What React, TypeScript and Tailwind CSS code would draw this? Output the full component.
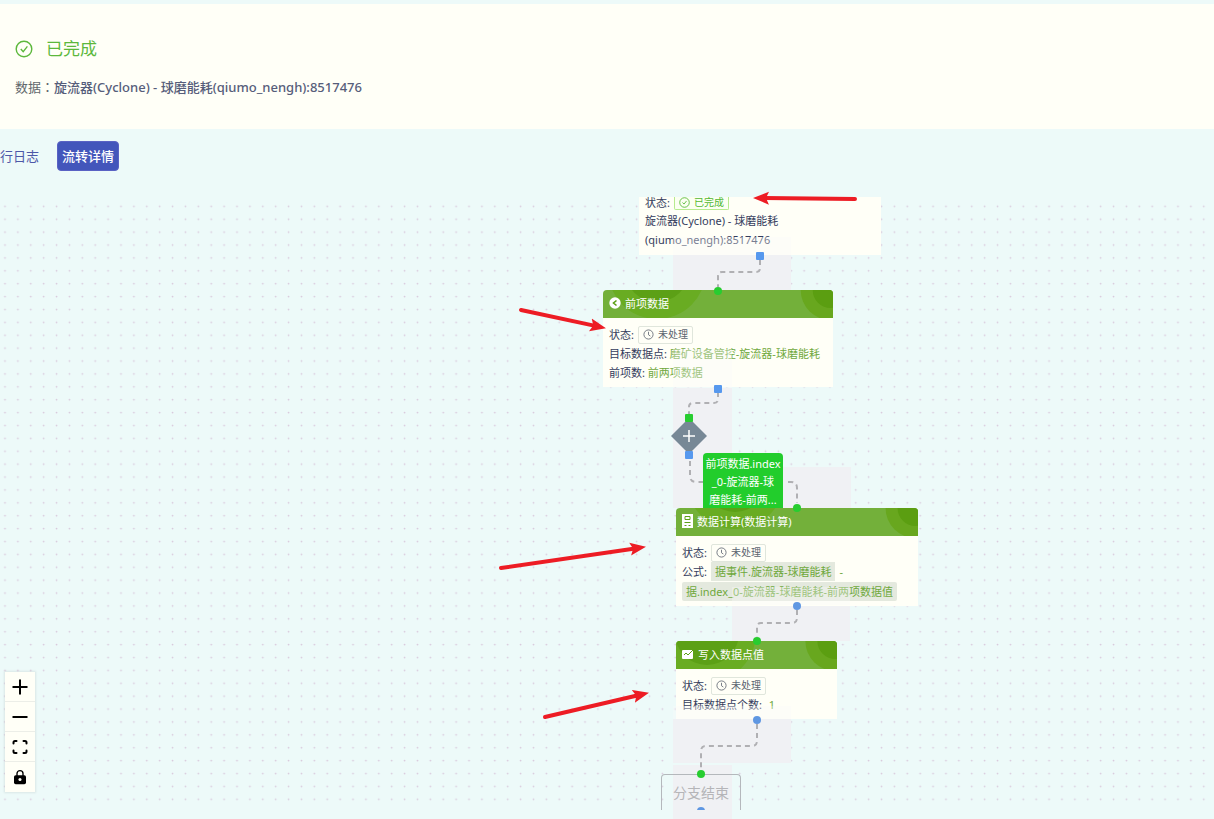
import { ReactNode } from "react";

interface FlowNodeProps {
  title: string;
  icon: ReactNode;
  className: string;
  ringX: number;
  ringY: number;
  children: ReactNode;
}

interface Point {
  x: number;
  y: number;
}

interface Arrow {
  from: Point;
  to: Point;
}

const arrows: Arrow[] = [
  { from: { x: 855, y: 2 }, to: { x: 754, y: 1 } },
  { from: { x: 521, y: 113 }, to: { x: 605, y: 131 } },
  { from: { x: 501, y: 371 }, to: { x: 645, y: 350 } },
  { from: { x: 545, y: 520 }, to: { x: 648, y: 496 } },
];

const edges = [
  "M760 63 V71 Q760 75 756 75 H722 Q718 75 718 79 V90",
  "M718 195 V202 Q718 206 714 206 H693 Q689 206 689 210 V218",
  "M690 264 V279 Q690 285 696 285 H704",
  "M788 285 H791 Q797 285 797 291 V306",
  "M797 413 V421 Q797 426 792 426 H761 Q757 426 757 430 V440",
  "M757 527 V544 Q757 549 752 549 H706 Q701 549 701 554 V573",
];

// grey areas behind the edges
const shades = [
  { x: 673, y: 58, w: 118, h: 36 },
  { x: 673, y: 191, w: 59, h: 120 },
  { x: 783, y: 270, w: 68, h: 41 },
  { x: 732, y: 409, w: 118, h: 35 },
  { x: 673, y: 522, w: 118, h: 44 },
  { x: 673, y: 568, w: 59, h: 54 },
];

const veils = [
  { x: 673, y: 40, w: 118, h: 18 },
  { x: 673, y: 152, w: 59, h: 39 },
  { x: 732, y: 390, w: 118, h: 18 },
  { x: 673, y: 509, w: 118, h: 13 },
];

function CheckCircle({ className }: { className: string }) {
  return (
    <svg
      viewBox="0 0 18 18"
      className={className}
      fill="none"
      stroke="currentColor"
      strokeWidth="1.4"
    >
      <circle cx="9" cy="9" r="7.8" />
      <path d="M5.8 9l2.4 2.6L12.4 6.4" />
    </svg>
  );
}

function ClockIcon() {
  return (
    <svg
      viewBox="0 0 12 12"
      className="size-[11px]"
      fill="none"
      stroke="currentColor"
      strokeWidth="0.9"
    >
      <circle cx="6" cy="6" r="5" />
      <path d="M6 3v3.3l2 1.4" />
    </svg>
  );
}

function Status() {
  return (
    <div className="flex h-[19px] items-center gap-1">
      <span>状态:</span>
      <span className="flex h-[18px] items-center gap-1 rounded-xs border border-[#e0e6dc] px-1 text-[10px] text-[#5c6470]">
        <ClockIcon />
        未处理
      </span>
    </div>
  );
}

function FlowNode(props: FlowNodeProps) {
  const { title, icon, className, ringX, ringY, children } = props;
  return (
    <div className={className}>
      <div className="relative h-7 overflow-hidden rounded-t-sm bg-[#73b03a]">
        <svg className="absolute inset-0 h-full w-full">
          <circle cx={ringX} cy={ringY} r="49" fill="#69ac22" />
          <circle cx={ringX} cy={ringY} r="32" fill="#5ca016" />
          <circle cx="99%" cy="0" r="30" fill="#68a71e" />
          <circle cx="99%" cy="0" r="18" fill="#5b9e11" />
        </svg>
        <div className="relative flex h-full items-center gap-1 px-1.5 pb-0.5 text-[11px] text-white">
          {icon}
          {title}
        </div>
      </div>
      <div className="bg-[#fffff7] px-1.5 pt-[7px] pb-[5px]">{children}</div>
    </div>
  );
}

function Controls() {
  const buttonClass =
    "flex h-[30px] w-[30px] items-center justify-center border-b border-[#eceee8] bg-[#fffff7] last:border-b-0";
  return (
    <div className="absolute bottom-[27px] left-[5px] shadow-[0_0_2px_1px_rgba(0,0,0,0.08)]">
      <button aria-label="放大" className={buttonClass}>
        <svg viewBox="0 0 16 16" className="size-4" stroke="#000" strokeWidth="2">
          <path d="M8 0.5v15M0.5 8h15" />
        </svg>
      </button>
      <button aria-label="缩小" className={buttonClass}>
        <svg viewBox="0 0 16 16" className="size-4" stroke="#000" strokeWidth="2">
          <path d="M0.5 8h15" />
        </svg>
      </button>
      <button aria-label="适应画布" className={buttonClass}>
        <svg
          viewBox="0 0 16 16"
          className="size-4"
          fill="none"
          stroke="#000"
          strokeWidth="2"
          strokeLinecap="round"
        >
          <path d="M1.5 4.5V3.5Q1.5 2 3 2h1.5M11.5 2H13Q14.5 2 14.5 3.5v1M14.5 11.5v1Q14.5 14 13 14h-1.5M4.5 14H3Q1.5 14 1.5 12.5v-1" />
        </svg>
      </button>
      <button aria-label="锁定" className={buttonClass}>
        <svg viewBox="0 0 14 18" className="h-4 w-3">
          <path d="M3.5 8V5a3.5 3.5 0 0 1 7 0v3" fill="none" stroke="#000" strokeWidth="1.6" />
          <rect x="0" y="7" width="14" height="10.5" rx="2" fill="#000" />
          <circle cx="7" cy="12" r="1.8" fill="#fffff7" />
        </svg>
      </button>
    </div>
  );
}

function Handle({ x, y, color, round = 4 }: Point & { color: string; round?: number }) {
  return <rect x={x - 4} y={y - 4} width="8" height="8" rx={round} fill={color} />;
}

function App() {
  return (
    <div className="flex min-h-screen flex-col overflow-hidden bg-[#edfaf9] pt-1 font-['Noto_Sans','Noto_Sans_CJK_SC',sans-serif] text-[13px] leading-5">
      <header className="bg-[#fffff7] px-[15px] pt-[33px] pb-8">
        <div className="flex h-6 items-center gap-[13px] text-[17px] text-[#5cb83c]">
          <CheckCircle className="size-[18px]" />
          <h1>已完成</h1>
        </div>
        <p className="mt-4 text-[#62686c]">
          数据
          <span className="font-['Noto_Sans_CJK_TC',sans-serif]" lang="zh-TW">
            ：
          </span>
          <span className="font-medium text-[#565d7a]">
            旋流器(Cyclone) - 球磨能耗(qiumo_nengh):8517476
          </span>
        </p>
      </header>

      <nav className="flex items-center gap-[18px] pt-3 pb-[26px]">
        <button className="text-[#4d58a8]">行日志</button>
        <button className="h-[30px] rounded-sm border border-[#5a62c4] bg-[#4356bb] px-1 font-medium text-white">
          流转详情
        </button>
      </nav>

      <main className="relative flex-1 text-[11px] text-[#343c5c]">
        <svg className="absolute inset-0 h-full w-full">
          <defs>
            <pattern
              id="dots"
              x="-1.5"
              y="2.8"
              width="12.89"
              height="12.89"
              patternUnits="userSpaceOnUse"
            >
              <circle cx="6.5" cy="6.5" r="0.9" fill="#d9c9dc" />
            </pattern>
          </defs>
          <rect width="100%" height="613" fill="url(#dots)" />
          {shades.map((s) => (
            <rect key={`${s.x}-${s.y}`} x={s.x} y={s.y} width={s.w} height={s.h} fill="#f0f1f4" />
          ))}
          {edges.map((d) => (
            <path key={d} d={d} fill="none" stroke="#b0b0b3" strokeWidth="2" strokeDasharray="5 4" />
          ))}
        </svg>

        <div className="absolute top-0 left-[639px] w-[242px] bg-[#fffff7] px-1.5 pb-[6px] leading-[19px]">
          <div className="flex h-3.5 items-start gap-1 leading-[11px]">
            <span>状态:</span>
            <span className="flex h-[13px] items-start gap-1 rounded-b-xs border border-t-0 border-[#b7eb8f] bg-[#fbfff2] px-1 text-[10px] text-[#52b832]">
              <CheckCircle className="size-[11px]" />
              已完成
            </span>
          </div>
          <p>旋流器(Cyclone) - 球磨能耗</p>
          <p>(qiumo_nengh):8517476</p>
        </div>

        <FlowNode
          title="前项数据"
          className="absolute top-[93px] left-[603px] w-[230px] leading-[19px]"
          ringX={54}
          ringY={-20}
          icon={
            <svg viewBox="0 0 12 12" className="size-3">
              <circle cx="6" cy="6" r="5.7" fill="#fff" />
              <path d="M7.5 3.5L4.5 6l3 2.5" fill="none" stroke="#5ca016" strokeWidth="1.6" />
            </svg>
          }
        >
          <Status />
          <p className="whitespace-nowrap">
            目标数据点:{" "}
            <span className="text-[#6fa83c]">磨矿设备管控-旋流器-球磨能耗</span>
          </p>
          <p>
            前项数: <span className="text-[#6fa83c]">前两项数据</span>
          </p>
        </FlowNode>

        <div className="absolute top-[221px] left-[671px]">
          <svg viewBox="0 0 36 36" className="size-9">
            <path d="M18 0L36 18 18 36 0 18z" fill="#778896" />
            <path d="M18 12v12M12 18h12" stroke="#fff" strokeWidth="1.5" />
          </svg>
        </div>

        <div className="absolute top-[256px] left-[703px] h-[60px] w-[80px] rounded-sm bg-[#22cd2c] pt-0.5 text-center leading-[18px] whitespace-nowrap text-white">
          <p>前项数据.index</p>
          <p>_0-旋流器-球</p>
          <p>磨能耗-前两...</p>
        </div>

        <FlowNode
          title="数据计算(数据计算)"
          className="absolute top-[311px] left-[676px] w-[242px] leading-[19px]"
          ringX={59}
          ringY={-28}
          icon={
            <svg viewBox="0 0 11 14" className="h-3.5 w-[11px]">
              <rect width="11" height="14" fill="#fff" />
              <path d="M3 2.5h5v3H3zM2.5 8.5h6M2.5 11.5h2M6.5 11.5h2" fill="none" stroke="#5ca016" />
            </svg>
          }
        >
          <Status />
          <p className="flex items-center gap-1">
            公式:
            <span className="flex h-[19px] items-center bg-[#e4e9de] px-1 text-[#6fa83c]">
              据事件.旋流器-球磨能耗
            </span>
            <span className="text-[#6fa83c]">-</span>
          </p>
          <p className="flex h-5 items-center">
            <span className="flex h-[19px] items-center rounded-xs bg-[#e4e9de] px-1 whitespace-nowrap text-[#6fa83c]">
              据.index_0-旋流器-球磨能耗-前两项数据值
            </span>
          </p>
        </FlowNode>

        <FlowNode
          title="写入数据点值"
          className="absolute top-[444px] left-[676px] w-[161px] leading-[19px]"
          ringX={31}
          ringY={-8}
          icon={
            <svg viewBox="0 0 12 10" className="h-2.5 w-3">
              <rect y="1" width="11" height="9" rx="1" fill="#fff" />
              <path d="M2 6l2-2 2 2 5-5" fill="none" stroke="#5ca016" />
            </svg>
          }
        >
          <Status />
          <p>
            目标数据点个数: <span className="ml-1 text-[#6fa83c]">1</span>
          </p>
        </FlowNode>

        <div className="absolute top-[577px] left-[661px] h-[36px] w-20 rounded-t-sm border border-b-0 border-[#b4b8bc] text-center text-sm leading-9 text-[#b5b5b8]">
          分支结束
        </div>

        <svg className="pointer-events-none absolute inset-0 h-full w-full overflow-visible">
          <defs>
            <clipPath id="canvas">
              <rect width="100%" height="613" />
            </clipPath>
            <marker
              id="head"
              viewBox="0 0 16 14"
              refX="15"
              refY="7"
              markerWidth="16"
              markerHeight="14"
              markerUnits="userSpaceOnUse"
              orient="auto"
            >
              <path d="M16 7L0 0.5 3 7 0 13.5z" fill="#ed1c24" />
            </marker>
          </defs>
          {veils.map((v) => (
            <rect
              key={`${v.x}-${v.y}`}
              x={v.x}
              y={v.y}
              width={v.w}
              height={v.h}
              fill="#fafafa"
              fillOpacity="0.35"
            />
          ))}
          <Handle x={718} y={94} color="#27cd30" />
          <Handle x={689} y={221} color="#27cd30" round={1} />
          <Handle x={797} y={311} color="#27cd30" />
          <Handle x={757} y={444} color="#27cd30" />
          <Handle x={701} y={577} color="#27cd30" />
          <Handle x={760} y={59} color="#5698ee" round={1} />
          <Handle x={718} y={192} color="#5698ee" round={1} />
          <Handle x={689} y={258} color="#5698ee" round={1} />
          <Handle x={797} y={409} color="#5f97e2" />
          <Handle x={757} y={523} color="#5f97e2" />
          <g clipPath="url(#canvas)">
            <Handle x={701} y={614} color="#5f97e2" />
          </g>
          {arrows.map(({ from, to }) => (
            <line
              key={from.y}
              x1={from.x}
              y1={from.y}
              x2={to.x}
              y2={to.y}
              stroke="#ed1c24"
              strokeWidth="4"
              strokeLinecap="round"
              strokeDasharray={`${Math.hypot(to.x - from.x, to.y - from.y) - 10} 20`}
              markerEnd="url(#head)"
            />
          ))}
        </svg>

        <Controls />
      </main>
    </div>
  );
}

export default App;
